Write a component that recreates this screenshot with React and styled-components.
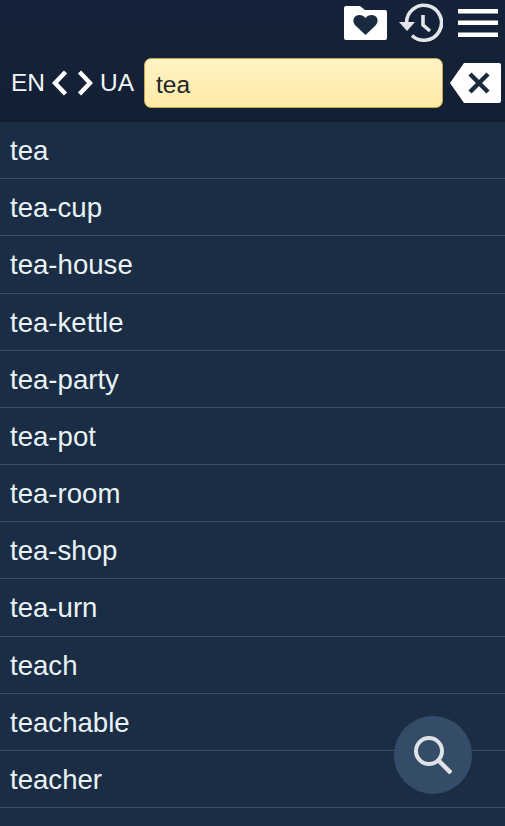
import React from 'react';
import styled, { createGlobalStyle } from 'styled-components';

const GlobalStyle = createGlobalStyle`
    html, body {
        margin: 0;
        padding: 0;
        background: #1b2d44;
        font-family: "Liberation Sans", Arial, sans-serif;
    }
`;

const Screen = styled.div`
    width: 505px;
    height: 826px;
    position: relative;
    overflow: hidden;
    background: #1b2d44;
`;

const Header = styled.header`
    height: 122px;
    box-sizing: border-box;
    background: linear-gradient(#14233a, #131f33);
    border-bottom: 2px solid #111b2b;
    display: flex;
    flex-direction: column;
`;

const Toolbar = styled.div`
    height: 45px;
    display: flex;
    align-items: center;
    justify-content: flex-end;
    padding-right: 7px;
`;

const ToolIcon = styled.span`
    display: block;
    height: ${({ $height }) => $height}px;
    margin-right: ${({ $gap }) => $gap}px;
    svg {
        display: block;
    }
`;

const SearchRow = styled.div`
    display: flex;
    align-items: center;
    height: 50px;
    margin-top: 13px;
    padding-left: 11px;
`;

const Lang = styled.span`
    width: 34px;
    color: #f2f5f7;
    font-size: 24.500px;
    line-height: 52px;
`;

const Arrows = styled.div`
    display: flex;
    align-items: center;
    gap: 9px;
    margin: 0 7px;
    svg {
        display: block;
    }
`;

const SearchBox = styled.div`
    width: 299px;
    height: 50px;
    box-sizing: border-box;
    margin-left: 10px;
    padding-left: 11px;
    border: 1px solid #c9a84c;
    border-radius: 7px;
    background: linear-gradient(#fff3c6, #ffeaa6);
    color: #20242c;
    font-size: 24.500px;
    line-height: 51px;
`;

const ClearButton = styled.button`
    width: 51px;
    height: 40px;
    margin-left: 7px;
    padding: 0;
    background: none;
    border: none;
    display: block;
    svg {
        display: block;
    }
`;

const WordList = styled.ul`
    list-style: none;
    margin: 0;
    padding: 0;
`;

const WordRow = styled.li`
    height: 57.180px;
    box-sizing: border-box;
    padding-left: 10px;
    border-bottom: 1px solid #3a4d65;
    color: #e9f3f5;
    font-size: 27.600px;
    line-height: 57px;
`;

const SearchFab = styled.button`
    position: absolute;
    left: 394px;
    top: 716px;
    width: 78px;
    height: 78px;
    padding: 0;
    border: none;
    border-radius: 50%;
    background: #354c69;
    display: flex;
    align-items: center;
    justify-content: center;
    svg {
        display: block;
    }
`;

const FolderHeart = () => (
    <svg width="43" height="34" viewBox="0 0 43 34">
        <path d="M2 0h14l5 4h20a2 2 0 0 1 2 2v26a2 2 0 0 1-2 2H2a2 2 0 0 1-2-2V2a2 2 0 0 1 2-2z" fill="#fff" />
        <path d="M21.500 29 12 20c-3-3-3-6-2-8 2-4 8.500-4 11.500 0 3-4 9.500-4 11.500 0 1 2 1 5-2 8z" fill="#1a2a3f" />
    </svg>
);

const HistoryIcon = () => (
    <svg width="44" height="40" viewBox="0 0 44 40" fill="none" stroke="#e3e5e8" strokeWidth="3.6">
        <path d="M7.500 20A17.500 17.500 0 1 1 13 32.500" />
        <path d="M0 19h16l-8 9z" fill="#e3e5e8" stroke="none" />
        <path d="M24 12v10l7 6" />
    </svg>
);

const Burger = () => (
    <svg width="40" height="28" viewBox="0 0 40 28" fill="#fff">
        <rect width="40" height="4.500" />
        <rect y="11.500" width="40" height="4.500" />
        <rect y="23.500" width="40" height="4.500" />
    </svg>
);

const Chevron = ({ flip }) => (
    <svg width="16" height="26" viewBox="0 0 16 26" fill="none" stroke="#fff" strokeWidth="4.500">
        <path d={flip ? 'M2.500 2l10.500 11L2.500 24' : 'M13.500 2 3 13l10.500 11'} />
    </svg>
);

const ClearIcon = () => (
    <svg width="51" height="40" viewBox="0 0 51 40">
        <path d="M14 0h35a2 2 0 0 1 2 2v36a2 2 0 0 1-2 2H14L0 20z" fill="#fff" />
        <path d="M20 11l18 18M38 11 20 29" stroke="#1a2a3f" strokeWidth="4.500" fill="none" />
    </svg>
);

const MagnifierIcon = () => (
    <svg width="38" height="38" viewBox="0 0 38 38" fill="none" stroke="#dfe2e6" strokeWidth="4">
        <circle cx="15" cy="15" r="13" />
        <path d="M25 25 37 37" strokeWidth="4.500" />
    </svg>
);

const words = [
    'tea', 'tea-cup', 'tea-house', 'tea-kettle', 'tea-party', 'tea-pot',
    'tea-room', 'tea-shop', 'tea-urn', 'teach', 'teachable', 'teacher',
];

const App = () => {
    return (
        <Screen>
            <GlobalStyle />
            <Header>
                <Toolbar>
                    <ToolIcon $height={34} $gap={12}><FolderHeart /></ToolIcon>
                    <ToolIcon $height={40} $gap={15}><HistoryIcon /></ToolIcon>
                    <ToolIcon $height={28} $gap={0}><Burger /></ToolIcon>
                </Toolbar>
                <SearchRow>
                    <Lang>EN</Lang>
                    <Arrows>
                        <Chevron />
                        <Chevron flip />
                    </Arrows>
                    <Lang>UA</Lang>
                    <SearchBox>tea</SearchBox>
                    <ClearButton aria-label="Clear"><ClearIcon /></ClearButton>
                </SearchRow>
            </Header>
            <WordList>
                {words.map((word) => (
                    <WordRow key={word}>{word}</WordRow>
                ))}
            </WordList>
            <SearchFab aria-label="Search"><MagnifierIcon /></SearchFab>
        </Screen>
    );
};

export default App;
